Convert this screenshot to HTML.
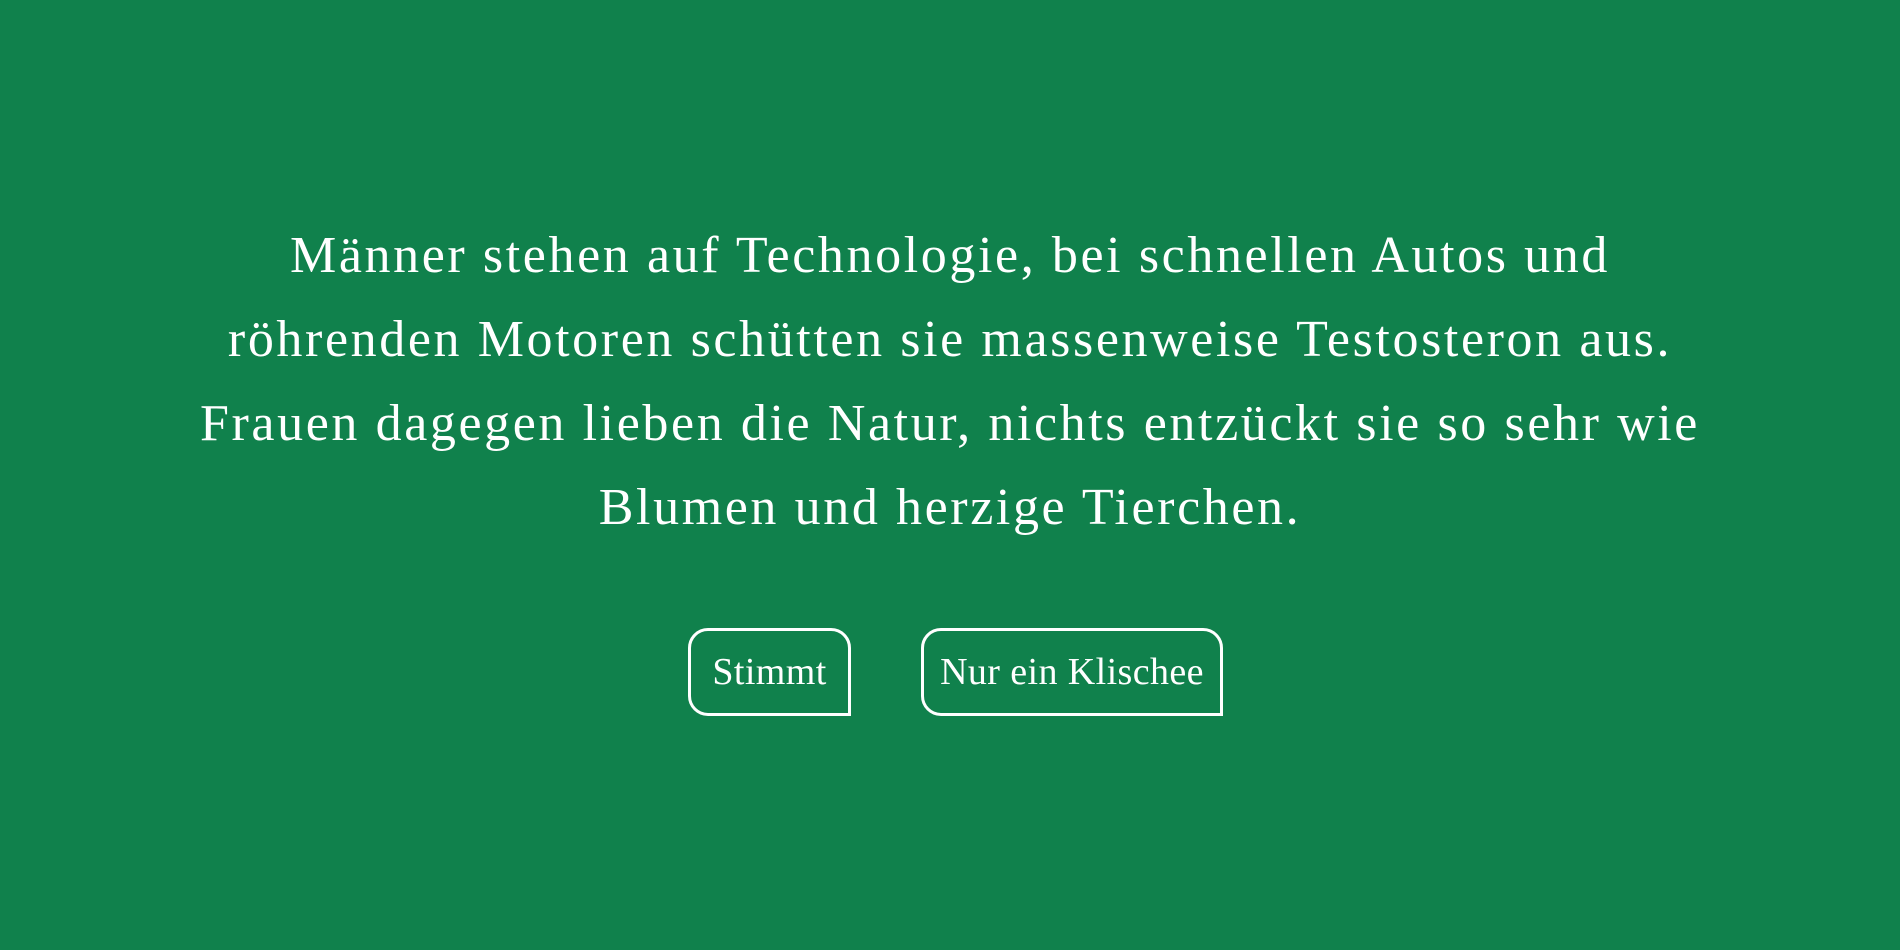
<!DOCTYPE html>
<html><head><meta charset="utf-8"><style>
html,body{margin:0;padding:0;width:1900px;height:950px;background:#10814c;overflow:hidden}
.t{position:absolute;left:0;top:214px;width:1900px;text-align:center;color:#fff;font-family:"Liberation Serif",serif;font-size:52px;letter-spacing:2.6px;line-height:84px}
.b{position:absolute;top:628px;height:82px;border:3px solid #fff;border-radius:20px 20px 0 20px;color:#fff;font-family:"Liberation Serif",serif;font-size:38px;letter-spacing:0.4px;line-height:82px;text-align:center;box-sizing:content-box}
</style></head><body>
<div class="t">Männer stehen auf Technologie, bei schnellen Autos und<br>röhrenden Motoren schütten sie massenweise Testosteron aus.<br>Frauen dagegen lieben die Natur, nichts entzückt sie so sehr wie<br>Blumen und herzige Tierchen.</div>
<div class="b" style="left:688px;width:157px">Stimmt</div>
<div class="b" style="left:921px;width:296px">Nur ein Klischee</div>
</body></html>
